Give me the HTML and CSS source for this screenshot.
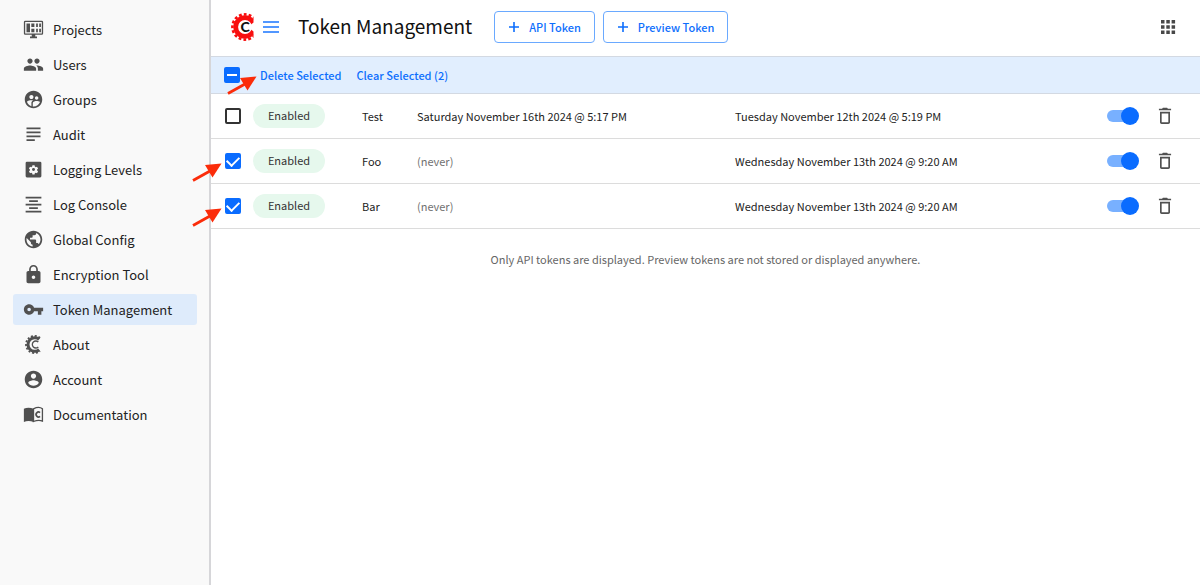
FILE: index.html
```html
<!DOCTYPE html>
<html lang="en">
<head>
<meta charset="utf-8">
<meta name="viewport" content="width=device-width, initial-scale=1">
<title>Token Management</title>
<link rel="stylesheet" href="styles.css">
</head>
<body>
<svg class="defs" aria-hidden="true">
  <symbol id="trash" viewBox="0 0 24 24"><path d="M6 19.500c0 1.100.9 2 2 2h8c1.100 0 2-.9 2-2V7H6v12.500zM8 9h8v10.500H8V9zm7.500-5.800l-1-1h-5l-1 1H4.700v2h14.600v-2z"/></symbol>
  <symbol id="arrow" viewBox="0 0 30 20"><path d="M1 18.500L18 9" stroke="#fb2c0a" stroke-width="2.800" fill="none"/><path d="M29.500 1.500L13 3L20.500 15.500Z" fill="#fb2c0a"/></symbol>
  <symbol id="plus" viewBox="0 0 12 12"><path d="M6 1v10M1 6h10" stroke="currentColor" stroke-width="1.600" fill="none"/></symbol>
  <symbol id="gear-c" viewBox="0 0 28 28">
    <clipPath id="gear-cut"><path d="M0 0H22.500V9.500L17 14L22.500 18.500V28H0Z"/></clipPath>
    <g clip-path="url(#gear-cut)" fill="none" stroke="currentColor">
      <circle cx="14" cy="14" r="9.300" stroke-width="4.800"/>
      <circle cx="14" cy="14" r="12.600" stroke-width="2.600" pathLength="32" stroke-dasharray="1.150 0.850" stroke-dashoffset="0.500"/>
    </g>
  </symbol>
</svg>
<div class="app">
  <nav class="sidebar" aria-label="Main">
    <a class="nav-item" href="#"><svg class="icon" viewBox="0 0 24 24"><path fill-rule="evenodd" d="M2.500 2h19A1.500 1.500 0 0 1 23 3.500v13a1.500 1.500 0 0 1-1.500 1.500H14v2h2v2H8v-2h2v-2H2.500A1.500 1.500 0 0 1 1 16.500v-13A1.500 1.500 0 0 1 2.500 2zM2.500 3.500v13h19v-13z"/><path d="M4 5h4v10H4zM9.500 5H13v4H9.500zM9.500 11H13v4H9.500zM15 5h2v4h-2zM15 11h2v4h-2zM18.500 5h2v4h-2zM18.500 11h2v4h-2z"/></svg><span>Projects</span></a>
    <a class="nav-item" href="#"><svg class="icon" viewBox="0 0 24 24"><path d="M16 11c1.660 0 2.990-1.340 2.990-3S17.660 5 16 5s-3 1.340-3 3 1.340 3 3 3zm-8 0c1.660 0 2.990-1.340 2.990-3S9.660 5 8 5 5 6.340 5 8s1.340 3 3 3zm0 2c-2.330 0-7 1.170-7 3.500V19h14v-2.500c0-2.330-4.670-3.500-7-3.500zm8 0c-.29 0-.62.020-.97.050 1.160.84 1.970 1.970 1.970 3.450V19h6v-2.500c0-2.330-4.670-3.500-7-3.500z"/></svg><span>Users</span></a>
    <a class="nav-item" href="#"><svg class="icon" viewBox="0 0 24 24"><path d="M12 2C6.480 2 2 6.480 2 12s4.480 10 10 10 10-4.480 10-10S17.520 2 12 2zm3.610 6.340c1.070 0 1.930.86 1.930 1.930s-.86 1.930-1.930 1.930-1.930-.86-1.930-1.930.86-1.930 1.930-1.930zm-6-1.580c1.300 0 2.360 1.060 2.360 2.360s-1.060 2.360-2.360 2.360-2.360-1.060-2.360-2.360 1.050-2.360 2.360-2.360zm0 9.130v3.750c-2.400-.75-4.300-2.600-5.140-4.960 1.050-1.120 3.670-1.690 5.140-1.690.53 0 1.200.080 1.900.22-1.640.87-1.900 2.020-1.900 2.680zM12 20c-.27 0-.53-.010-.79-.040v-4.070c0-1.420 2.940-2.130 4.400-2.130 1.070 0 2.920.39 3.840 1.150C18.280 17.880 15.390 20 12 20z"/></svg><span>Groups</span></a>
    <a class="nav-item" href="#"><svg class="icon" viewBox="0 0 24 24"><path d="M4 4h16v2H4zM4 8.500h16v2H4zM4 13h16v2H4zM4 17.500h9.500v2H4z"/></svg><span>Audit</span></a>
    <a class="nav-item" href="#"><svg class="icon" viewBox="0 0 24 24"><path fill-rule="evenodd" d="M4.500 3h15A1.500 1.500 0 0 1 21 4.500v15a1.500 1.500 0 0 1-1.500 1.500h-15A1.500 1.500 0 0 1 3 19.500v-15A1.500 1.500 0 0 1 4.500 3zM10.800 7.200l-.3 1.500-1.100.6-1.400-.5-1.200 2.100 1.100 1v1.200l-1.100 1 1.200 2.100 1.400-.5 1.100.6.3 1.500h2.400l.3-1.500 1.100-.6 1.400.5 1.200-2.100-1.100-1v-1.200l1.100-1-1.200-2.100-1.400.5-1.100-.6-.3-1.500z"/><circle cx="12" cy="12" r="1.700"/></svg><span>Logging Levels</span></a>
    <a class="nav-item" href="#"><svg class="icon" viewBox="0 0 24 24"><path d="M3 3h18v2H3zM7 7h10v2H7zM3 11h18v2H3zM7 15h10v2H7zM3 19h18v2H3z"/></svg><span>Log Console</span></a>
    <a class="nav-item" href="#"><svg class="icon" viewBox="0 0 24 24"><path d="M12 2C6.480 2 2 6.480 2 12s4.480 10 10 10 10-4.480 10-10S17.520 2 12 2zm-1 17.930c-3.950-.49-7-3.850-7-7.930 0-.62.080-1.210.21-1.790L9 15v1c0 1.100.9 2 2 2v1.930zM17.900 17.390c-.26-.81-1-1.390-1.900-1.390h-1v-3c0-.55-.45-1-1-1H8v-2h2c.55 0 1-.45 1-1V7h2c1.100 0 2-.9 2-2v-.41c2.930 1.190 5 4.060 5 7.410 0 2.080-.8 3.970-2.100 5.390z"/></svg><span>Global Config</span></a>
    <a class="nav-item" href="#"><svg class="icon" viewBox="0 0 24 24"><path fill-rule="evenodd" d="M18 8h-1V6c0-2.760-2.240-5-5-5S7 3.240 7 6v2H6c-1.100 0-2 .9-2 2v10c0 1.100.9 2 2 2h12c1.100 0 2-.9 2-2V10c0-1.100-.9-2-2-2zm-6 9c-1.100 0-2-.9-2-2s.9-2 2-2 2 .9 2 2-.9 2-2 2zm3.100-9H8.900V6c0-1.710 1.390-3.100 3.100-3.100s3.100 1.390 3.100 3.100v2z"/></svg><span>Encryption Tool</span></a>
    <a class="nav-item nav-item-active" href="#" aria-current="page"><svg class="icon" viewBox="0 0 24 24"><path d="M12.650 10C11.830 7.670 9.610 6 7 6c-3.310 0-6 2.690-6 6s2.690 6 6 6c2.610 0 4.830-1.670 5.650-4H17v4h4v-4h2v-4H12.650zM7 14c-1.100 0-2-.9-2-2s.9-2 2-2 2 .9 2 2-.9 2-2 2z"/></svg><span>Token Management</span></a>
    <a class="nav-item" href="#"><svg class="icon" viewBox="0 0 24 24"><g fill="none" stroke="currentColor"><path d="M18.500 6A7.800 7.800 0 1 0 18.500 18" stroke-width="3.400"/><path d="M19.500 4.500A9.800 9.800 0 1 0 19.500 19.500" stroke-width="2" stroke-dasharray="2.300 2"/><path d="M17.500 9.200A4 4 0 1 0 17.500 14.800" stroke-width="1.500"/></g></svg><span>About</span></a>
    <a class="nav-item" href="#"><svg class="icon" viewBox="0 0 24 24"><path d="M12 2C6.480 2 2 6.480 2 12s4.480 10 10 10 10-4.480 10-10S17.520 2 12 2zm0 3c1.660 0 3 1.340 3 3s-1.340 3-3 3-3-1.340-3-3 1.340-3 3-3zm0 14.200c-2.500 0-4.710-1.280-6-3.220.030-1.990 4-3.080 6-3.080 1.990 0 5.970 1.090 6 3.080-1.290 1.940-3.500 3.220-6 3.220z"/></svg><span>Account</span></a>
    <a class="nav-item" href="#"><svg class="icon" viewBox="0 0 24 24"><path d="M1 5.500C4 3.700 8.500 3.700 12 5.500V20.500C8.500 18.900 4 18.900 1 20.500Z"/><path d="M12 5.500C15.500 3.700 20 3.700 22.200 5.500V19.500C19 18.300 15.500 18.700 12 20Z" fill="none" stroke="currentColor" stroke-width="1.500"/><path d="M19.500 9.800A2.800 2.800 0 1 0 19.500 14.200" fill="none" stroke="currentColor" stroke-width="1.900"/></svg><span>Documentation</span></a>
  </nav>
  <main class="main">
    <header class="topbar">
      <span class="logo"><svg class="logo-gear" viewBox="0 0 28 28"><use href="#gear-c"/></svg><span class="logo-letter">C</span></span>
      <button class="icon-button" type="button" aria-label="Menu"><svg class="menu-icon" viewBox="0 0 16 12"><path d="M0 1h16M0 6h16M0 11h16" stroke="currentColor" stroke-width="1.700"/></svg></button>
      <h1 class="title">Token Management</h1>
      <div class="actions">
        <button class="outline-button" type="button"><svg class="plus"><use href="#plus"/></svg><span>API Token</span></button>
        <button class="outline-button" type="button"><svg class="plus"><use href="#plus"/></svg><span>Preview Token</span></button>
      </div>
      <button class="icon-button apps" type="button" aria-label="Apps"><svg class="apps-icon" viewBox="0 0 16 16"><path d="M1 1h3.500v3.500H1zM6.300 1h3.500v3.500H6.300zM11.600 1h3.500v3.500h-3.500zM1 6.300h3.500v3.500H1zM6.300 6.300h3.500v3.500H6.300zM11.600 6.300h3.500v3.500h-3.500zM1 11.600h3.500v3.500H1zM6.300 11.600h3.500v3.500H6.300zM11.600 11.600h3.500v3.500h-3.500z"/></svg></button>
    </header>
    <div class="selection">
      <span class="check-wrap"><input class="check check-mixed" type="checkbox" aria-label="Select all" aria-checked="mixed"><svg class="arrow arrow-top"><use href="#arrow"/></svg></span>
      <button class="text-button" type="button">Delete Selected</button>
      <button class="text-button" type="button">Clear Selected (2)</button>
    </div>
    <table class="tokens">
      <colgroup><col class="col-check"><col class="col-status"><col class="col-name"><col class="col-expires"><col><col class="col-toggle"><col class="col-trash"></colgroup>
      <tbody>
        <tr>
          <td class="cell-check"><span class="check-wrap"><input class="check" type="checkbox" aria-label="Select Test"></span></td>
          <td><span class="badge">Enabled</span></td><td>Test</td>
          <td>Saturday November 16th 2024 @ 5:17 PM</td><td>Tuesday November 12th 2024 @ 5:19 PM</td>
          <td><input class="toggle" type="checkbox" role="switch" aria-label="Test enabled" checked></td>
          <td><button class="icon-button" type="button" aria-label="Delete Test"><svg class="trash"><use href="#trash"/></svg></button></td>
        </tr>
        <tr>
          <td class="cell-check"><span class="check-wrap"><input class="check" type="checkbox" aria-label="Select Foo" checked><svg class="arrow"><use href="#arrow"/></svg></span></td>
          <td><span class="badge">Enabled</span></td><td>Foo</td>
          <td class="muted">(never)</td><td>Wednesday November 13th 2024 @ 9:20 AM</td>
          <td><input class="toggle" type="checkbox" role="switch" aria-label="Foo enabled" checked></td>
          <td><button class="icon-button" type="button" aria-label="Delete Foo"><svg class="trash"><use href="#trash"/></svg></button></td>
        </tr>
        <tr>
          <td class="cell-check"><span class="check-wrap"><input class="check" type="checkbox" aria-label="Select Bar" checked><svg class="arrow"><use href="#arrow"/></svg></span></td>
          <td><span class="badge">Enabled</span></td><td>Bar</td>
          <td class="muted">(never)</td><td>Wednesday November 13th 2024 @ 9:20 AM</td>
          <td><input class="toggle" type="checkbox" role="switch" aria-label="Bar enabled" checked></td>
          <td><button class="icon-button" type="button" aria-label="Delete Bar"><svg class="trash"><use href="#trash"/></svg></button></td>
        </tr>
      </tbody>
    </table>
    <p class="note">Only API tokens are displayed. Preview tokens are not stored or displayed anywhere.</p>
  </main>
</div>
</body>
</html>
```
FILE: styles.css
```css
* { box-sizing: border-box; }
body { margin: 0; font: 11px/16px "Noto Sans CJK SC", "Noto Sans", sans-serif; color: #222; background: #fff; }
button { font: inherit; border: 0; background: none; padding: 0; cursor: pointer; }
.defs { position: absolute; width: 0; height: 0; }
.app { display: grid; grid-template-columns: 211px 1fr; min-height: 100vh; }

.sidebar { display: flex; flex-direction: column; gap: 4px; padding: 14px 12px 14px 13px; background: #f9f9f9; border-right: 2px solid #d6d6d9; }
.nav-item { display: flex; align-items: center; gap: 9px; padding: 5px 10px; border-radius: 3px; font-size: 13px; line-height: 21px; color: #222; text-decoration: none; }
.nav-item-active { background: #deebfb; }
.icon { width: 21px; height: 21px; flex: none; fill: #505050; color: #505050; }

.topbar { display: flex; align-items: center; height: 56px; padding: 0 24px 2px 20px; }
.logo { display: grid; place-items: center; margin-right: 4px; }
.logo > * { grid-area: 1 / 1; }
.logo-gear { width: 28px; height: 28px; color: #f80f0f; }
.logo-letter { font: 900 14px/16px "Lato", sans-serif; color: #111; }
.icon-button { display: flex; color: #1a76ff; }
.menu-icon { width: 16px; height: 12px; }
.title { margin: 0 22px 2px 19px; font-size: 19px; line-height: 28px; font-weight: 400; color: #111; }
.actions { display: flex; gap: 8px; }
.outline-button { display: flex; align-items: center; gap: 9px; height: 32px; padding: 0 13px; border: 1px solid #6aa9ff; border-radius: 4px; color: #0d6efd; font-weight: 500; }
.plus { width: 12px; height: 12px; }
.apps { margin-left: auto; }
.apps-icon { width: 16px; height: 16px; fill: #484848; }

.selection { display: flex; align-items: center; height: 38px; padding-left: 13px; background: #e1eefe; border: solid #d3d9e2; border-width: 1px 0; }
.text-button { margin-right: 15px; color: #0d6efd; font-weight: 500; }
.selection .check-wrap { margin-right: 20px; }

.check-wrap { position: relative; display: flex; width: 16px; }
.check { appearance: none; display: grid; place-items: center; width: 16px; height: 16px; margin: 0; border: 2px solid #333; border-radius: 2px; flex: none; }
.check:checked, .check-mixed { background: #0a6cff; border-color: #0a6cff; }
.check:checked::before { content: ""; width: 10px; height: 6px; border: solid #fff; border-width: 0 0 2px 2px; transform: translateY(-1px) rotate(-45deg); }
.check-mixed::before { content: ""; width: 10px; height: 2px; background: #fff; }
.arrow { position: absolute; left: -33px; top: 9px; width: 30px; height: 20px; overflow: visible; }
.arrow-top { left: 3px; top: 8px; }

.tokens { width: 100%; border-collapse: separate; border-spacing: 0; table-layout: fixed; }
.tokens td { height: 45px; padding: 0; border-bottom: 1px solid #dcdcdc; }
.tokens .cell-check { padding-left: 14px; }
.col-check { width: 42px; }
.col-status { width: 109px; }
.col-name { width: 55px; }
.col-expires { width: 318px; }
.col-toggle { width: 48px; }
.col-trash { width: 45px; }
.badge { display: inline-block; width: 72px; padding-bottom: 1px; border-radius: 12px; line-height: 23px; text-align: center; background: #e6f8ed; color: #333; }
.muted { color: #707070; }
.toggle { appearance: none; display: flex; align-items: center; justify-content: flex-end; width: 28px; height: 12px; margin: 0; border-radius: 6px; background: #78b0ff; }
.toggle::before { content: ""; flex: none; width: 18px; height: 18px; margin-right: -4px; border-radius: 50%; background: #0a6cff; }
.trash { width: 20px; height: 20px; fill: #505050; }
.note { margin: 22px 0 0; text-align: center; color: #666; }
```
